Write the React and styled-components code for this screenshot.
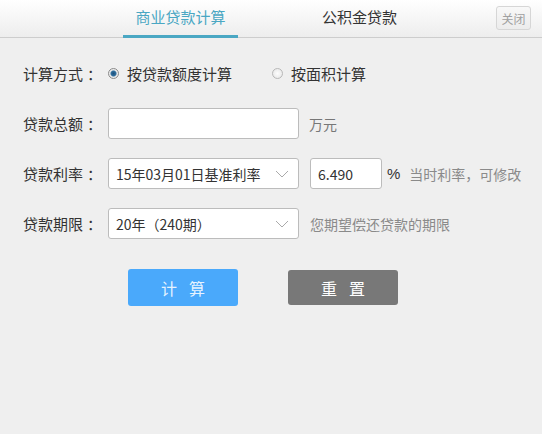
import React, { useState } from 'react'
import styled, { createGlobalStyle } from 'styled-components'

const GlobalStyle = createGlobalStyle`
  html, body {
    margin: 0;
    padding: 0;
    background: #efefef;
  }
  body {
    font-family: "Noto Sans CJK SC", "Liberation Sans", sans-serif;
    color: #333;
  }
`

const RATES = ['15年03月01日基准利率', '15年05月11日基准利率', '14年11月22日基准利率']
const TERMS = ['20年（240期）', '10年（120期）', '30年（360期）']

const Chevron = () => (
  <svg width='14' height='8' viewBox='0 0 14 8'>
    <path d='M1 1 L7 7 L13 1' fill='none' stroke='#aaa' strokeWidth='1' />
  </svg>
)

const App = () => {
  const [tab, setTab] = useState(0)
  const [mode, setMode] = useState('amount')
  const [total, setTotal] = useState('')
  const [rate, setRate] = useState('6.490')

  return (
    <Page>
      <GlobalStyle />
      {/* ====header tabs */}
      <Header>
        <Tabs>
          <Tab $active={tab === 0} onClick={() => setTab(0)}>
            商业贷款计算
          </Tab>
          <Tab $active={tab === 1} onClick={() => setTab(1)}>
            公积金贷款
          </Tab>
        </Tabs>
        <CloseButton>关闭</CloseButton>
      </Header>

      {/* ====form */}
      <Form onSubmit={(e) => e.preventDefault()}>
        {/* mode */}
        <Row>
          <Label>
            计算方式<Colon>：</Colon>
          </Label>
          <Radio onClick={() => setMode('amount')}>
            <Dot $checked={mode === 'amount'} />
            按贷款额度计算
          </Radio>
          <Radio $gap={40} onClick={() => setMode('area')}>
            <Dot $checked={mode === 'area'} />
            按面积计算
          </Radio>
        </Row>

        {/* total */}
        <Row>
          <Label>
            贷款总额<Colon>：</Colon>
          </Label>
          <Field $width={191}>
            <input value={total} onChange={(e) => setTotal(e.target.value)} />
          </Field>
          <Hint $gap={10} $color='#777'>
            万元
          </Hint>
        </Row>

        {/* rate */}
        <Row>
          <Label>
            贷款利率<Colon>：</Colon>
          </Label>
          <Select $width={191}>
            <span>{RATES[0]}</span>
            <Chevron />
          </Select>
          <Field $width={72} $gap={11}>
            <input value={rate} onChange={(e) => setRate(e.target.value)} />
          </Field>
          <Percent>%</Percent>
          <Hint $gap={9}>当时利率，可修改</Hint>
        </Row>

        {/* term */}
        <Row>
          <Label>
            贷款期限<Colon>：</Colon>
          </Label>
          <Select $width={191}>
            <span>{TERMS[0]}</span>
            <Chevron />
          </Select>
          <Hint $gap={11}>您期望偿还贷款的期限</Hint>
        </Row>

        <Buttons>
          <Button type='submit' $bg='#4aa9fb' $color='#e6f3ff' $height={37}>
            计算
          </Button>
          <Button type='button' $bg='#787878' $color='#fff' $height={35}>
            重置
          </Button>
        </Buttons>
      </Form>
    </Page>
  )
}

const Page = styled.div`
  width: 542px;
  height: 434px;
  background: #efefef;
`

const Header = styled.div`
  height: 38px;
  box-sizing: border-box;
  display: flex;
  align-items: flex-start;
  justify-content: space-between;
  background: linear-gradient(#ffffff, #ededed);
  border-bottom: 1px solid #cdcdcd;
`

const Tabs = styled.div`
  display: flex;
  gap: 64px;
  padding-left: 123px;
  height: 38px;
`

const Tab = styled.div`
  width: 115px;
  height: 38px;
  box-sizing: border-box;
  display: flex;
  align-items: center;
  justify-content: center;
  padding-bottom: 3px;
  font-size: 15px;
  cursor: pointer;
  color: ${({ $active }) => ($active ? '#4aa7c3' : '#333')};
  border-bottom: 3px solid ${({ $active }) => ($active ? '#4aa7c3' : 'transparent')};
`

const CloseButton = styled.button`
  margin: 6px 11px 0 0;
  width: 35px;
  height: 24px;
  padding: 0;
  font-family: inherit;
  font-size: 12px;
  color: #a0a0a0;
  border: 1px solid #d6d6d6;
  border-radius: 3px;
  background: linear-gradient(#f8f8f8, #ececec);
`

const Form = styled.form`
  display: flex;
  flex-direction: column;
  gap: 19px;
  padding: 20px 0 0 23px;
`

const Row = styled.div`
  display: flex;
  align-items: center;
  height: 31px;
`

const Label = styled.label`
  width: 85px;
  flex-shrink: 0;
  font-size: 15px;
  color: #333;
`

const Colon = styled.span`
  margin-left: 4px;
`

const Radio = styled.div`
  display: flex;
  align-items: center;
  gap: 8px;
  margin-left: ${({ $gap }) => $gap || 0}px;
  font-size: 15px;
  color: #333;
  cursor: pointer;
`

const Dot = styled.span`
  width: 11px;
  height: 11px;
  box-sizing: border-box;
  border-radius: 50%;
  border: 1px solid ${({ $checked }) => ($checked ? '#8a8a8a' : '#b8b8b8')};
  background: ${({ $checked }) =>
    $checked
      ? 'radial-gradient(circle, #1d4f7a 0, #2f6f9f 2.5px, #e8e8e8 3.5px, #f6f6f6 100%)'
      : 'radial-gradient(circle, #fdfdfd 0, #e4e4e4 100%)'};
`

const Field = styled.div`
  width: ${({ $width }) => $width}px;
  height: 31px;
  margin-left: ${({ $gap }) => $gap || 0}px;
  box-sizing: border-box;
  border: 1px solid #bcbcbc;
  border-radius: 3px;
  background: #fff;
  input {
    width: 100%;
    height: 100%;
    box-sizing: border-box;
    border: none;
    outline: none;
    background: transparent;
    padding: 0 7px;
    font-family: inherit;
    font-size: 14px;
    color: #333;
  }
`

const Select = styled.div`
  width: ${({ $width }) => $width}px;
  height: 31px;
  box-sizing: border-box;
  display: flex;
  align-items: center;
  justify-content: space-between;
  padding: 0 9px 0 7px;
  border: 1px solid #bcbcbc;
  border-radius: 3px;
  background: #fff;
  font-size: 14px;
  color: #333;
  cursor: pointer;
`

const Percent = styled.span`
  margin-left: 5px;
  font-family: "Liberation Sans", sans-serif;
  font-size: 15px;
  color: #333;
`

const Hint = styled.span`
  margin-left: ${({ $gap }) => $gap}px;
  font-size: 14px;
  color: ${({ $color }) => $color || '#8a8a8a'};
`

const Buttons = styled.div`
  display: flex;
  align-items: center;
  gap: 50px;
  padding-left: 105px;
  margin-top: 11px;
`

const Button = styled.button`
  width: 110px;
  height: ${({ $height }) => $height}px;
  border: none;
  border-radius: 3px;
  background: ${({ $bg }) => $bg};
  color: ${({ $color }) => $color};
  font-family: inherit;
  font-size: 16px;
  letter-spacing: 12px;
  padding: 0 0 0 12px;
  cursor: pointer;
`

export default App
